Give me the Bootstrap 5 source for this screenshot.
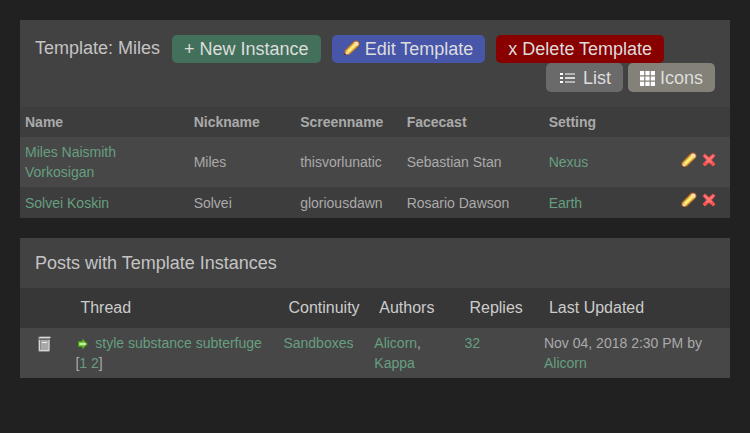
<!DOCTYPE html>
<html lang="en">
<head>
<meta charset="utf-8">
<meta name="viewport" content="width=device-width, initial-scale=1">
<title>Template: Miles</title>
<link href="https://cdn.jsdelivr.net/npm/bootstrap@5.3.0/dist/css/bootstrap.min.css" rel="stylesheet">
<style>
body { background: #212121; color: #aaa; font: 14px/20px "Liberation Sans", Arial, sans-serif; padding: 20px; }
a { color: #669f80; text-decoration: none; }
a:hover { color: #8cc4a5; }
.panel { background: #424242; }
.panel + .panel { margin-top: 20px; }
.panel-title { color: #c4c4c4; font-size: 18px; line-height: 20px; font-weight: 400; }
.template-head { padding: 15px; column-gap: 11px; }
.template-head .panel-title { line-height: 26px; margin-right: 1px; }
.post-head { padding: 15px; }
.tool { display: inline-flex; align-items: center; border: 0; border-radius: 5px; padding: 4px 12px; font-size: 18px; line-height: 20px; color: #ddd; }
.tool svg { margin-right: 5px; }
.tool-new { background: #42705a; }
.tool-edit { background: #4756a9; }
.tool-edit svg { margin-bottom: 3px; }
.tool-delete { background: #880000; }
.view-switch { column-gap: 5px; }
.view-switch .tool { padding-top: 5px; }
.tool-list { background: #6a6a6a; }
.tool-icons { background: #848178; }
.grid { table-layout: fixed; width: 100%; }
.grid th, .grid td { padding: 5px; }
.instances { background: #3d3d3d; }
.instances tbody tr:nth-child(odd) { background: #474747; }
.instances .actions { padding-right: 13px; text-align: right; white-space: nowrap; }
.instances .actions a + a { margin-left: 4px; }
.actions svg { display: inline-block; vertical-align: baseline; }
.posts th { background: #373737; color: #ccc; font-size: 16px; font-weight: 400; padding: 10px; }
.posts td { background: #474747; vertical-align: top; }
.posts .state { text-align: center; padding-top: 8px; }
.arrow { vertical-align: middle; }
.c-name { width: 23.75%; } .c-nick, .c-screen { width: 15%; } .c-face { width: 20%; } .c-setting { width: 15%; }
.c-state { width: 7.1%; } .c-thread { width: 29.3%; } .c-cont { width: 12.8%; } .c-auth { width: 12.7%; } .c-rep { width: 11.2%; }
</style>
<script src="https://cdn.jsdelivr.net/npm/bootstrap@5.3.0/dist/js/bootstrap.bundle.min.js"></script>
</head>
<body>
<svg width="0" height="0" class="d-none" aria-hidden="true">
  <symbol id="pencil" viewBox="0 0 16 16">
    <path d="M.4 15 .6 10.4 10 .9Q12.6-.2 14.8 1.7Q16.2 4 14.8 6L5.5 14.8Z" fill="#b87525"/>
    <path d="M1.8 10.9 10.6 2.1 13.9 5.4 5.1 13.7Z" fill="#f0c247"/>
    <path d="M2.9 11.2 10.9 3.4 12.5 5 4.6 12.7Z" fill="#fff08a"/>
    <path d="M10 2.6Q12.3.8 14.1 2.5Q15.5 4.2 13.5 6Z" fill="#fbe0cc"/>
    <path d="M1.7 10.9 5.1 13.8 1.6 14.4Z" fill="#f8dcb8"/>
    <path d="M.4 12.8 2.6 15H.4Z" fill="#4b321f"/>
  </symbol>
  <symbol id="cross" viewBox="0 0 16 16">
    <path d="M2 3.8 3.9 2 8 5.6 12.1 2 14 3.8 10.4 8 14 12.2 12.1 14 8 10.4 3.9 14 2 12.2 5.6 8Z" fill="#ff6464" stroke="#ee5050" stroke-linejoin="round"/>
    <path d="M4 4 12 12M12 4 4 12" stroke="#ff7b7b" stroke-width="1.4"/>
    <path d="M10.5 10.5 12.3 12.3M5.5 10.5 3.7 12.3" stroke="#ff4a4a" stroke-width="2"/>
  </symbol>
</svg>

<main>
  <section class="panel">
    <header class="template-head d-flex flex-wrap">
      <h1 class="panel-title mb-0">Template: Miles</h1>
      <a class="tool tool-new" href="#new">+ New Instance</a>
      <a class="tool tool-edit" href="#edit"><svg width="16" height="16" aria-hidden="true"><use href="#pencil"/></svg>Edit Template</a>
      <a class="tool tool-delete" href="#delete">x Delete Template</a>
      <nav class="view-switch d-flex ms-auto" aria-label="View">
        <a class="tool tool-list" href="#list"><svg width="20" height="16" viewBox="0 0 20 16" aria-hidden="true"><path d="M2 3h3v2H2zM2 7h3v2H2zM2 11h3v2H2z" fill="#fff"/><path d="M7 3.5h10v1H7zM7 7.3h10v1.4H7zM7 11.5h10v1H7z" fill="#fff"/></svg>List</a>
        <a class="tool tool-icons" href="#icons"><svg width="15" height="15" viewBox="0 0 15 15" aria-hidden="true"><path d="M0 0h4.2v4.2H0zM5.4 0h4.2v4.2H5.4zM10.8 0H15v4.2h-4.2zM0 5.4h4.2v4.2H0zM5.4 5.4h4.2v4.2H5.4zM10.8 5.4H15v4.2h-4.2zM0 10.8h4.2V15H0zM5.4 10.8h4.2V15H5.4zM10.8 10.8H15V15h-4.2z" fill="#fff"/></svg>Icons</a>
      </nav>
    </header>
    <table class="grid instances">
      <colgroup><col class="c-name"><col class="c-nick"><col class="c-screen"><col class="c-face"><col class="c-setting"><col></colgroup>
      <thead><tr><th scope="col">Name</th><th scope="col">Nickname</th><th scope="col">Screenname</th><th scope="col">Facecast</th><th scope="col">Setting</th><th></th></tr></thead>
      <tbody>
        <tr><td><a href="#miles">Miles Naismith Vorkosigan</a></td><td>Miles</td><td>thisvorlunatic</td><td>Sebastian Stan</td><td><a href="#nexus">Nexus</a></td>
          <td class="actions"><a href="#edit-miles" aria-label="Edit"><svg width="16" height="16"><use href="#pencil"/></svg></a><a href="#delete-miles" aria-label="Delete"><svg width="16" height="16"><use href="#cross"/></svg></a></td></tr>
        <tr><td><a href="#solvei">Solvei Koskin</a></td><td>Solvei</td><td>gloriousdawn</td><td>Rosario Dawson</td><td><a href="#earth">Earth</a></td>
          <td class="actions"><a href="#edit-solvei" aria-label="Edit"><svg width="16" height="16"><use href="#pencil"/></svg></a><a href="#delete-solvei" aria-label="Delete"><svg width="16" height="16"><use href="#cross"/></svg></a></td></tr>
      </tbody>
    </table>
  </section>

  <section class="panel">
    <h2 class="panel-title post-head mb-0">Posts with Template Instances</h2>
    <table class="grid posts">
      <colgroup><col class="c-state"><col class="c-thread"><col class="c-cont"><col class="c-auth"><col class="c-rep"><col></colgroup>
      <thead><tr><th></th><th scope="col">Thread</th><th scope="col">Continuity</th><th scope="col">Authors</th><th scope="col">Replies</th><th scope="col">Last Updated</th></tr></thead>
      <tbody>
        <tr>
          <td class="state"><svg class="d-block mx-auto" width="16" height="16" viewBox="0 0 16 16" role="img" aria-label="Complete"><path d="M1 1.5 2.5 0H13.5V2H12.5V16H2L1 15Z" fill="#777"/><path d="M2 2H12.5V15.5H2Z" fill="#8e8e8e"/><path d="M4 3H12V15H4Z" fill="#a9a9a9"/><path d="M2.5 1.5H13.5M2.5 2.5V14.5H12V3.5" fill="none" stroke="#d8d8d8"/><path d="M5 6.5h5" stroke="#eee"/><path d="M2 3.5h10" stroke="#666"/></svg></td>
          <td><a href="#unread" aria-label="First unread"><svg class="arrow" width="16" height="16" viewBox="0 0 16 16" aria-hidden="true"><path d="M3.5 5.5H7.5V3.2L12.4 8 7.5 12.8V10.5H3.5Z" fill="#7fc545" stroke="#419e14"/><path d="M4.5 8H11" stroke="#c3eb9e" stroke-width="2"/></svg></a> <a href="#thread">style substance subterfuge</a> [<a href="#p1">1</a> <a href="#p2">2</a>]</td>
          <td><a href="#sandboxes">Sandboxes</a></td>
          <td><a href="#alicorn">Alicorn</a>, <a href="#kappa">Kappa</a></td>
          <td><a href="#replies">32</a></td>
          <td>Nov 04, 2018 2:30 PM by <a href="#alicorn">Alicorn</a></td>
        </tr>
      </tbody>
    </table>
  </section>
</main>
</body>
</html>
